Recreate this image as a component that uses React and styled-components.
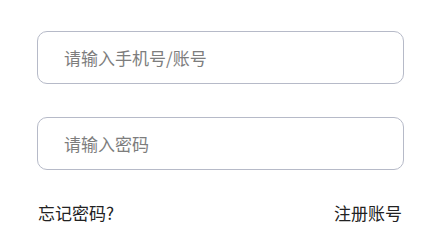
import React from "react";
import styled, { createGlobalStyle } from "styled-components";

const Global = createGlobalStyle`
  html, body { margin: 0; padding: 0; background: #fff; }
  body { font-family: "Noto Sans CJK SC", "Noto Sans", sans-serif; }
`;

const Page = styled.div`
  padding: 31px 36px 0 37px;
  display: flex;
  flex-direction: column;
`;

const Field = styled.div`
  height: 53px;
  box-sizing: border-box;
  border: 1px solid #b6bac8;
  border-radius: 10px;
  display: flex;
  align-items: center;
  padding-left: 26px;
  margin-bottom: ${(p) => p.$gap || 0}px;
`;

const Placeholder = styled.span`
  font-size: 17px;
  color: #7d7d7d;
`;

const Links = styled.div`
  display: flex;
  justify-content: space-between;
  margin-top: 31px;
  padding: 0 2px 0 1px;
  font-size: 17px;
  color: #222;
  line-height: 24px;
`;

export default function App() {
  return (
    <>
      <Global />
      <Page>
        <Field $gap={33}>
          <Placeholder>请输入手机号/账号</Placeholder>
        </Field>
        <Field>
          <Placeholder>请输入密码</Placeholder>
        </Field>
        <Links>
          <span>忘记密码?</span>
          <span>注册账号</span>
        </Links>
      </Page>
    </>
  );
}
